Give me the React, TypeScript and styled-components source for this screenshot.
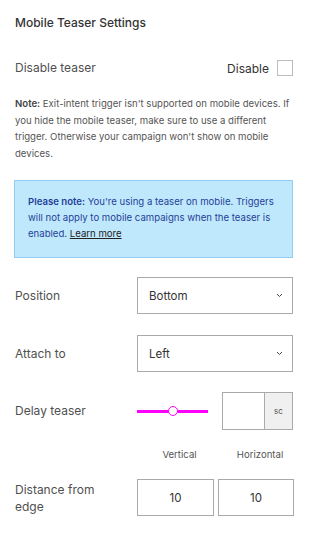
import React, { useState } from "react";
import styled, { createGlobalStyle } from "styled-components";

const GlobalStyle = createGlobalStyle`
    html, body {
        margin: 0;
        padding: 0;
        background: #ffffff;
    }
    body {
        font-family: Inter, "Noto Sans", "Liberation Sans", sans-serif;
        -webkit-font-smoothing: antialiased;
    }
    * {
        box-sizing: border-box;
    }
`;

const Panel = styled.div`
    display: flex;
    flex-direction: column;
    padding: 15px 19px 30px 14px;
    width: 312px;
`;

const Title = styled.h2`
    margin: 0 0 0 1px;
    font-size: 12px;
    line-height: 15px;
    font-weight: 500;
    color: #333333;
`;

const DisableRow = styled.div`
    margin-top: 30px;
    display: flex;
    align-items: center;
    justify-content: space-between;
    height: 16px;
    padding-left: 1px;
`;

const Label = styled.span`
    font-size: 12px;
    line-height: 16px;
    color: #505050;
`;

const CheckLabel = styled.label`
    display: flex;
    align-items: center;
    gap: 8px;
    font-size: 12px;
    color: #333333;
    cursor: pointer;
`;

const Checkbox = styled.span<{ $checked: boolean }>`
    width: 16px;
    height: 16px;
    border: 1px solid #bdbdbd;
    background: ${(p) => (p.$checked ? "#ff00ff" : "#ffffff")};
`;

const Note = styled.p`
    margin: 20px 0 0 1px;
    font-size: 9.6px;
    line-height: 16.5px;
    color: #555555;

    b {
        font-weight: 600;
        color: #444444;
    }
`;

const Alert = styled.div`
    margin-top: 18px;
    padding: 13px 12px 15px 13px;
    background: #c0e8fc;
    border: 1px solid #95ccf5;
    font-size: 9.6px;
    line-height: 16px;
    color: #1f3f99;

    b {
        font-weight: 600;
    }

    a {
        color: #222222;
        text-decoration: underline;
    }
`;

const FieldRow = styled.div<{ $gap: number; $height: number }>`
    margin-top: ${(p) => p.$gap}px;
    display: grid;
    grid-template-columns: 122px 1fr;
    align-items: center;
    min-height: ${(p) => p.$height}px;
    padding-left: 1px;
`;

const SelectBox = styled.div`
    height: 37px;
    border: 1px solid #aaaaaa;
    display: flex;
    align-items: center;
    justify-content: space-between;
    padding: 0 9px 0 11px;
    font-size: 11.5px;
    color: #333333;
    cursor: pointer;
`;

const DelayControls = styled.div`
    display: flex;
    align-items: center;
    justify-content: space-between;
`;

const SliderTrack = styled.div`
    position: relative;
    width: 71px;
    height: 3px;
    background: #ff00ff;
`;

const SliderThumb = styled.span`
    position: absolute;
    top: 50%;
    width: 10px;
    height: 10px;
    margin-left: -5px;
    margin-top: -5px;
    border-radius: 50%;
    border: 1px solid #ff00ff;
    background: #ffffff;
`;

const UnitInput = styled.div`
    width: 71px;
    height: 38px;
    border: 1px solid #aaaaaa;
    display: flex;
`;

const InputField = styled.input`
    flex: 1;
    min-width: 0;
    border: none;
    outline: none;
    font-family: inherit;
    font-size: 11.5px;
    color: #333333;
    text-align: center;
    background: #ffffff;
`;

const Addon = styled.span`
    width: 28px;
    border-left: 1px solid #aaaaaa;
    background: #f0f0f0;
    display: flex;
    align-items: center;
    justify-content: center;
    font-size: 8px;
    color: #555555;
`;

const PairGrid = styled.div`
    display: grid;
    grid-template-columns: 77px 76px;
    gap: 4px;
`;

const AxisRow = styled.div`
    margin-top: 18px;
    display: grid;
    grid-template-columns: 122px 77px 76px;
    column-gap: 4px;
    padding-left: 1px;
`;

const AxisLabel = styled.span`
    font-size: 9.6px;
    line-height: 14px;
    color: #555555;
    text-align: center;
`;

const BoxInput = styled.input`
    height: 37px;
    width: 100%;
    border: 1px solid #aaaaaa;
    outline: none;
    font-family: inherit;
    font-size: 11.5px;
    color: #333333;
    text-align: center;
    background: #ffffff;
`;

const TwoLineLabel = styled(Label)`
    line-height: 17px;
`;

function Chevron() {
    return (
        <svg width="7" height="5" viewBox="0 0 7 5" fill="none">
            <polyline points="1,1 3.5,3.5 6,1" stroke="#444" strokeWidth="1" />
        </svg>
    );
}

export default function App() {
    const [disabled, setDisabled] = useState(false);
    const [delay] = useState(50);

    return (
        <>
            <GlobalStyle />
            <Panel>
                <Title>Mobile Teaser Settings</Title>

                <DisableRow>
                    <Label>Disable teaser</Label>
                    <CheckLabel onClick={() => setDisabled(!disabled)}>
                        Disable
                        <Checkbox $checked={disabled} />
                    </CheckLabel>
                </DisableRow>

                <Note>
                    <b>Note:</b> Exit-intent trigger isn't supported on mobile devices. If you hide the mobile teaser,
                    make sure to use a different trigger. Otherwise your campaign won't show on mobile devices.
                </Note>

                <Alert>
                    <b>Please note:</b> You're using a teaser on mobile. Triggers will not apply to mobile campaigns
                    when the teaser is enabled. <a href="#">Learn more</a>
                </Alert>

                <FieldRow $gap={19} $height={37}>
                    <Label>Position</Label>
                    <SelectBox>
                        Bottom
                        <Chevron />
                    </SelectBox>
                </FieldRow>

                <FieldRow $gap={21} $height={37}>
                    <Label>Attach to</Label>
                    <SelectBox>
                        Left
                        <Chevron />
                    </SelectBox>
                </FieldRow>

                <FieldRow $gap={20} $height={38}>
                    <Label>Delay teaser</Label>
                    <DelayControls>
                        <SliderTrack>
                            <SliderThumb style={{ left: `${delay}%` }} />
                        </SliderTrack>
                        <UnitInput>
                            <InputField defaultValue="" />
                            <Addon>sc</Addon>
                        </UnitInput>
                    </DelayControls>
                </FieldRow>

                <AxisRow>
                    <span />
                    <AxisLabel>Vertical</AxisLabel>
                    <AxisLabel>Horizontal</AxisLabel>
                </AxisRow>

                <FieldRow $gap={17} $height={37}>
                    <TwoLineLabel>
                        Distance from
                        <br />
                        edge
                    </TwoLineLabel>
                    <PairGrid>
                        <BoxInput defaultValue="10" />
                        <BoxInput defaultValue="10" />
                    </PairGrid>
                </FieldRow>
            </Panel>
        </>
    );
}
